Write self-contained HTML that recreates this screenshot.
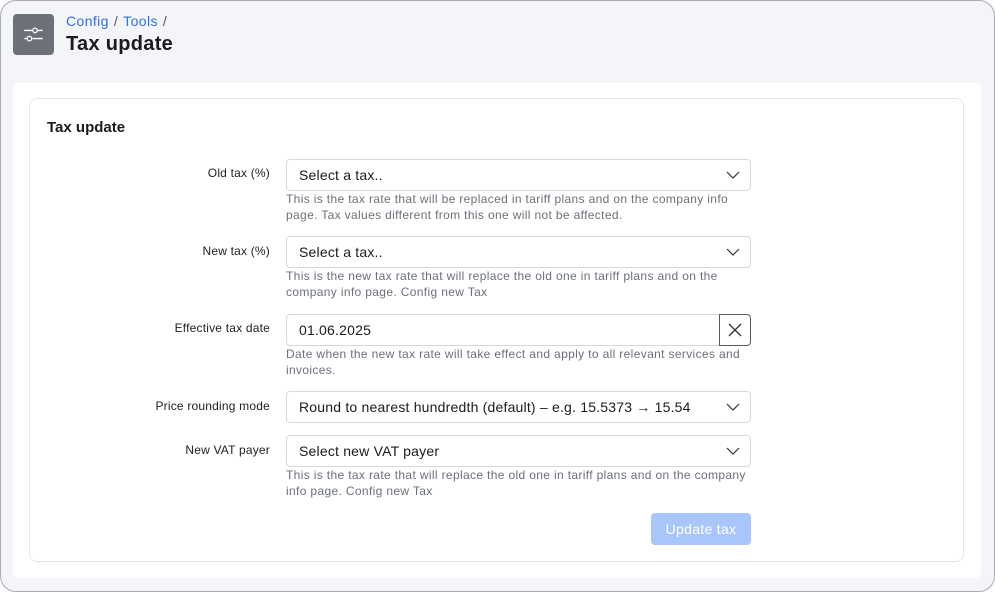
<!DOCTYPE html><html><head><style>
*{box-sizing:border-box;margin:0;padding:0}
body{width:995px;height:592px;background:#fff;font-family:"Liberation Sans",sans-serif;position:relative;overflow:hidden}
.frame{position:absolute;left:0;top:0;width:995px;height:592px;border:1px solid #a9abb0;border-radius:16px;background:#f4f5f9;overflow:hidden}
.icon{position:absolute;left:12px;top:13px;width:41px;height:41px;border-radius:4px;background:#6b7079}
.bc{position:absolute;left:65px;top:12px;font-size:14px;color:#2f6fe4;letter-spacing:0.4px}
.bc span{color:#555;margin:0 5px}
h1{position:absolute;left:65px;top:32px;font-size:20px;font-weight:bold;color:#1a1b1f;letter-spacing:0.3px}
.panel{position:absolute;left:12px;top:82px;width:968px;height:495px;background:#fff;border-radius:6px}
.card{position:absolute;left:16px;top:15px;width:935px;height:464px;border:1px solid #e3e5e9;border-radius:8px}
h2{position:absolute;left:17px;top:20px;font-size:15px;font-weight:bold;color:#1a1b1f}
.lbl{position:absolute;right:693px;font-size:12px;color:#222;text-align:right;white-space:nowrap;letter-spacing:0.2px}
.inp{position:absolute;left:256px;width:465px;height:32px;border:1px solid #d5d8de;border-radius:4px;font-size:14px;color:#1a1b1f;padding:7px 12px;letter-spacing:0.2px}
.inp svg{position:absolute;right:10px;top:11px}
.help{position:absolute;left:256px;width:465px;font-size:12px;line-height:16px;color:#6b7079;letter-spacing:0.35px}
.btn{position:absolute;left:621px;top:414px;width:100px;height:32px;border-radius:4px;background:#a9c6fb;color:#fff;font-size:14px;text-align:center;line-height:32px;letter-spacing:0.3px}
</style></head><body><div class="frame">
<div class="icon"><svg width="41" height="41" viewBox="0 0 40 40" fill="none" stroke="#fff" stroke-width="1.3"><path d="M11 16h8M24 16h5M11 24h2M19 24h10"/><circle cx="21.5" cy="16" r="2.2"/><circle cx="16" cy="24" r="2.2"/></svg></div>
<div class="bc">Config<span>/</span>Tools<span>/</span></div>
<h1>Tax update</h1>
<div class="panel"><div class="card">
<h2>Tax update</h2>
<div class="lbl" style="top:67px">Old tax (%)</div>
<div class="inp" style="top:60px">Select a tax..<svg width="14" height="8" viewBox="0 0 14 8" fill="none" stroke="#333" stroke-width="1.2"><path d="M1 1l6 6 6-6"/></svg></div>
<div class="help" style="top:92px">This is the tax rate that will be replaced in tariff plans and on the company info page. Tax values different from this one will not be affected.</div>
<div class="lbl" style="top:145px">New tax (%)</div>
<div class="inp" style="top:137px">Select a tax..<svg width="14" height="8" viewBox="0 0 14 8" fill="none" stroke="#333" stroke-width="1.2"><path d="M1 1l6 6 6-6"/></svg></div>
<div class="help" style="top:169px">This is the new tax rate that will replace the old one in tariff plans and on the company info page. Config new Tax</div>
<div class="lbl" style="top:222px">Effective tax date</div>
<div class="inp" style="top:215px;width:434px;border-radius:4px 0 0 4px">01.06.2025</div>
<div style="position:absolute;left:689px;top:215px;width:32px;height:32px;border:1px solid #555b66;border-radius:0 4px 4px 0"><svg width="30" height="30" viewBox="0 0 30 30" stroke="#333" stroke-width="1.3"><path d="M9 9l12 12M21 9L9 21"/></svg></div>
<div class="help" style="top:247px">Date when the new tax rate will take effect and apply to all relevant services and invoices.</div>
<div class="lbl" style="top:300px">Price rounding mode</div>
<div class="inp" style="top:292px">Round to nearest hundredth (default) – e.g. 15.5373 → 15.54<svg width="14" height="8" viewBox="0 0 14 8" fill="none" stroke="#333" stroke-width="1.2"><path d="M1 1l6 6 6-6"/></svg></div>
<div class="lbl" style="top:344px">New VAT payer</div>
<div class="inp" style="top:336px">Select new VAT payer<svg width="14" height="8" viewBox="0 0 14 8" fill="none" stroke="#333" stroke-width="1.2"><path d="M1 1l6 6 6-6"/></svg></div>
<div class="help" style="top:368px">This is the tax rate that will replace the old one in tariff plans and on the company info page. Config new Tax</div>
<div class="btn">Update tax</div>
</div></div>
</div></body></html>
